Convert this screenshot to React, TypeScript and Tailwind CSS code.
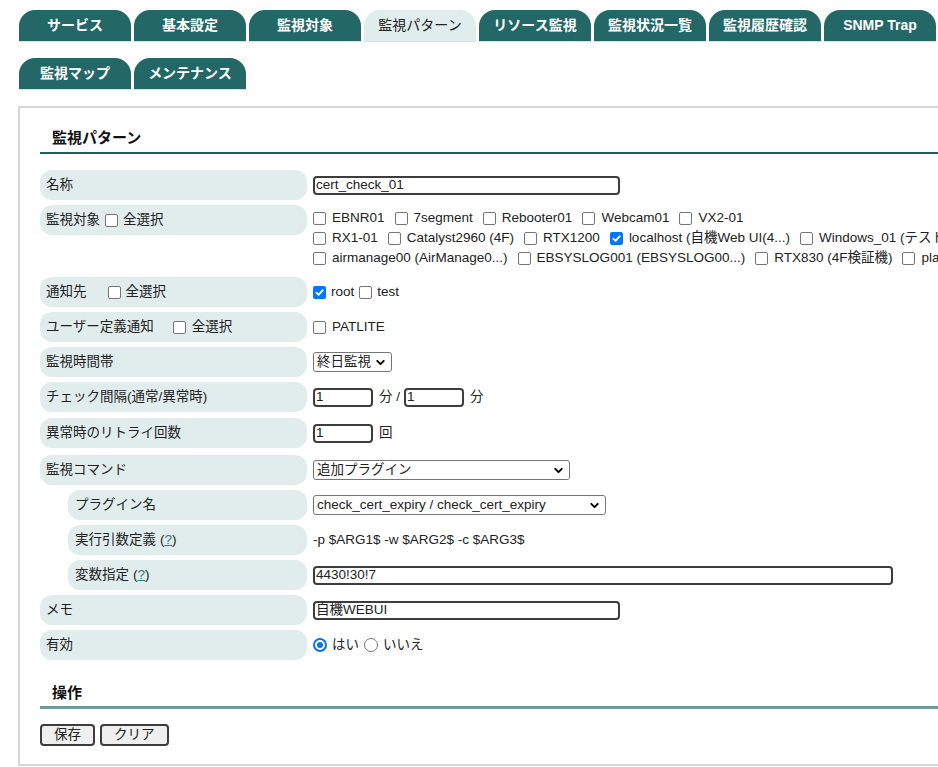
import React from 'react';
import { ChevronDown } from 'lucide-react';

const tabsRow1 = ['サービス', '基本設定', '監視対象', '監視パターン', 'リソース監視', '監視状況一覧', '監視履歴確認', 'SNMP Trap'];
const tabsRow2 = ['監視マップ', 'メンテナンス'];

const Tab = ({ label, active }: { label: string; active?: boolean }) => (
  <div
    className={
      active
        ? 'w-[112px] h-[32px] rounded-t-[16px] bg-[#e0eded] text-[#222] text-[14px] flex items-center justify-center border-b border-[#d3e3e3]'
        : 'w-[112px] h-[32px] rounded-t-[16px] bg-[#246767] text-white font-bold text-[14px] flex items-center justify-center border-b border-[#cfe0e0]'
    }
  >
    {label}
  </div>
);

const Check = ({ checked }: { checked?: boolean }) =>
  checked ? (
    <span className="inline-flex shrink-0 w-[13px] h-[13px] rounded-[2px] bg-[#0075ff] items-center justify-center">
      <svg width="11" height="11" viewBox="0 0 12 12">
        <path d="M2.5 6.2 L5 8.6 L9.6 3.4" fill="none" stroke="white" strokeWidth="2" strokeLinecap="round" strokeLinejoin="round" />
      </svg>
    </span>
  ) : (
    <span className="inline-block shrink-0 w-[13px] h-[13px] rounded-[2px] border border-[#767676] bg-white" />
  );

const Radio = ({ checked }: { checked?: boolean }) =>
  checked ? (
    <span className="inline-flex shrink-0 w-[14px] h-[14px] rounded-full border-2 border-[#0075ff] items-center justify-center bg-white">
      <span className="w-[6px] h-[6px] rounded-full bg-[#0075ff]" />
    </span>
  ) : (
    <span className="inline-block shrink-0 w-[14px] h-[14px] rounded-full border border-[#767676] bg-white" />
  );

const Select = ({ value, width }: { value: string; width: string }) => (
  <div className={`${width} h-[20px] border border-[#767676] rounded-[3px] bg-white flex items-center justify-between pl-[3px] pr-[4px]`}>
    <span className="whitespace-nowrap">{value}</span>
    <ChevronDown size={13} strokeWidth={3.5} className="text-black" />
  </div>
);

const TextBox = ({ value, width }: { value: string; width: string }) => (
  <div className={`${width} h-[19px] border-2 border-[#3d3d3d] rounded-[4px] bg-white flex items-center px-[1px] leading-none whitespace-nowrap`}>
    {value}
  </div>
);

const Row = ({
  label,
  sub,
  children,
  tall,
  gap = 'mb-[5px]',
}: {
  label: React.ReactNode;
  sub?: boolean;
  children?: React.ReactNode;
  tall?: boolean;
  gap?: string;
}) => (
  <div className={`flex items-start ${gap}`}>
    <div
      className={
        sub
          ? 'ml-[28px] w-[239px] h-[30px] rounded-[12px] bg-[#e1eded] flex items-center pl-[7px] shrink-0'
          : 'w-[267px] h-[30px] rounded-[12px] bg-[#e1eded] flex items-center pl-[6px] shrink-0'
      }
    >
      {label}
    </div>
    <div className={tall ? 'ml-[6px] pt-[3px] pb-[4px]' : 'ml-[6px] h-[30px] flex items-center'}>{children}</div>
  </div>
);

const targets: { name: string; checked?: boolean }[][] = [
  [{ name: 'EBNR01' }, { name: '7segment' }, { name: 'Rebooter01' }, { name: 'Webcam01' }, { name: 'VX2-01' }],
  [
    { name: 'RX1-01' },
    { name: 'Catalyst2960 (4F)' },
    { name: 'RTX1200' },
    { name: 'localhost (自機Web UI(4...)', checked: true },
    { name: 'Windows_01 (テスト用...)' },
  ],
  [
    { name: 'airmanage00 (AirManage0...)' },
    { name: 'EBSYSLOG001 (EBSYSLOG00...)' },
    { name: 'RTX830 (4F検証機)' },
    { name: 'platform01' },
  ],
];

const Help = () => (
  <span className="ml-[4px]">
    (<span className="text-[#2a7a8a] underline">?</span>)
  </span>
);

export default function App() {
  return (
    <div className="w-[938px] h-[767px] overflow-hidden bg-white text-[#222] text-[13.5px] font-['Liberation_Sans','Noto_Sans_CJK_JP',sans-serif]">
      <div className="pl-[19px] pt-[10px]">
        <div className="flex gap-[3px]">
          {tabsRow1.map((t) => (
            <Tab key={t} label={t} active={t === '監視パターン'} />
          ))}
        </div>
        <div className="flex gap-[3px] mt-[16px]">
          {tabsRow2.map((t) => (
            <Tab key={t} label={t} />
          ))}
        </div>
      </div>

      <div className="ml-[18px] mt-[16px] w-[1100px] border-2 border-[#d6d6d6] pl-[20px] pt-[20px] pb-[18px]">
        <div className="pl-[12px] pb-[4px] border-b-2 border-[#1f5e5e] text-[15px] font-bold leading-[20px] text-[#111]">
          監視パターン
        </div>

        <div className="mt-[16px]">
          <Row label="名称">
            <TextBox value="cert_check_01" width="w-[307px]" />
          </Row>

          <Row
            tall
            label={
              <span className="flex items-center">
                監視対象
                <span className="ml-[5px] mr-[5px] flex">
                  <Check />
                </span>
                全選択
              </span>
            }
          >
            {targets.map((line, i) => (
              <div key={i} className="flex items-center h-[20px] whitespace-nowrap">
                {line.map((t) => (
                  <span key={t.name} className="flex items-center mr-[10px]">
                    <Check checked={t.checked} />
                    <span className="ml-[6px]">{t.name}</span>
                  </span>
                ))}
              </div>
            ))}
          </Row>

          <Row
            label={
              <span className="flex items-center">
                通知先
                <span className="ml-[21px] mr-[5px] flex">
                  <Check />
                </span>
                全選択
              </span>
            }
          >
            <span className="flex items-center">
              <Check checked />
              <span className="ml-[5px] mr-[5px]">root</span>
              <Check />
              <span className="ml-[5px]">test</span>
            </span>
          </Row>

          <Row
            label={
              <span className="flex items-center">
                ユーザー定義通知
                <span className="ml-[19px] mr-[6px] flex">
                  <Check />
                </span>
                全選択
              </span>
            }
          >
            <span className="flex items-center">
              <Check />
              <span className="ml-[6px]">PATLITE</span>
            </span>
          </Row>

          <Row label="監視時間帯">
            <Select value="終日監視" width="w-[79px]" />
          </Row>

          <Row label="チェック間隔(通常/異常時)" gap="mb-[6px]">
            <span className="flex items-center">
              <TextBox value="1" width="w-[60px]" />
              <span className="ml-[6px] mr-[4px]">分 /</span>
              <TextBox value="1" width="w-[60px]" />
              <span className="ml-[6px]">分</span>
            </span>
          </Row>

          <Row label="異常時のリトライ回数" gap="mb-[7px]">
            <span className="flex items-center">
              <TextBox value="1" width="w-[60px]" />
              <span className="ml-[6px]">回</span>
            </span>
          </Row>

          <Row label="監視コマンド">
            <Select value="追加プラグイン" width="w-[257px]" />
          </Row>

          <Row sub label="プラグイン名">
            <Select value="check_cert_expiry / check_cert_expiry" width="w-[293px]" />
          </Row>

          <Row
            sub
            label={
              <span>
                実行引数定義
                <Help />
              </span>
            }
          >
            <span className="whitespace-nowrap">-p $ARG1$ -w $ARG2$ -c $ARG3$</span>
          </Row>

          <Row
            sub
            label={
              <span>
                変数指定
                <Help />
              </span>
            }
          >
            <TextBox value="4430!30!7" width="w-[580px]" />
          </Row>

          <Row label="メモ">
            <TextBox value="自機WEBUI" width="w-[307px]" />
          </Row>

          <div className="flex items-start">
            <div className="w-[267px] h-[30px] rounded-[12px] bg-[#e1eded] flex items-center pl-[6px] shrink-0">有効</div>
            <div className="ml-[6px] h-[30px] flex items-center">
              <Radio checked />
              <span className="ml-[5px] mr-[5px]">はい</span>
              <Radio />
              <span className="ml-[5px]">いいえ</span>
            </div>
          </div>
        </div>

        <div className="mt-[23px] pl-[12px] pb-[3px] border-b-[3px] border-[#6d9b9b] text-[15px] font-bold leading-[20px] text-[#111]">
          操作
        </div>

        <div className="mt-[15px] flex gap-[5px]">
          <button className="h-[22px] px-[12px] border-2 border-[#3c3c3c] rounded-[4px] bg-[#efefef] leading-none">保存</button>
          <button className="h-[22px] px-[12px] border-2 border-[#3c3c3c] rounded-[4px] bg-[#efefef] leading-none">クリア</button>
        </div>
      </div>
    </div>
  );
}
